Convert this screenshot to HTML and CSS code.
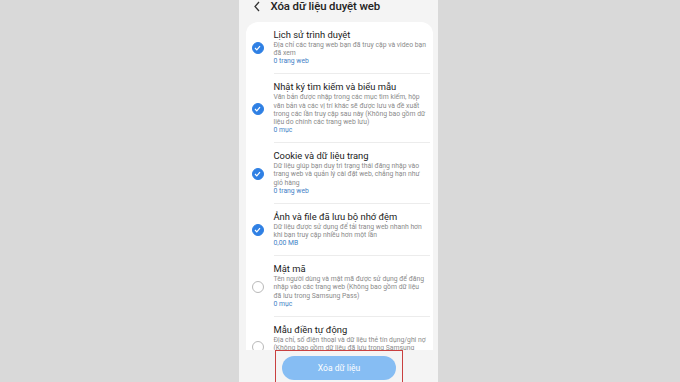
FILE: index.html
```html
<!DOCTYPE html>
<html lang="vi">
<head>
<meta charset="utf-8">
<link rel="stylesheet" href="styles.css">
</head>
<body>
<div class="screen">
  <div class="header">
    <svg class="back" width="8" height="11" viewBox="0 0 8 11"><path d="M6 1 L2 5.5 L6 10" fill="none" stroke="#333" stroke-width="1.3"/></svg>
    <span class="title">Xóa dữ liệu duyệt web</span>
  </div>
  <div class="card">
    <div class="row">
      <span class="check on"><svg width="7" height="6" viewBox="0 0 7 6"><path d="M1 3 L2.8 4.8 L6 1.2" fill="none" stroke="#fff" stroke-width="1.2"/></svg></span>
      <div class="text">
        <div class="name">Lịch sử trình duyệt</div>
        <div class="desc">Địa chỉ các trang web bạn đã truy cập và video bạn đã xem</div>
        <div class="count">0 trang web</div>
      </div>
    </div>
    <div class="row">
      <span class="check on"><svg width="7" height="6" viewBox="0 0 7 6"><path d="M1 3 L2.8 4.8 L6 1.2" fill="none" stroke="#fff" stroke-width="1.2"/></svg></span>
      <div class="text">
        <div class="name">Nhật ký tìm kiếm và biểu mẫu</div>
        <div class="desc">Văn bản được nhập trong các mục tìm kiếm, hộp văn bản và các vị trí khác sẽ được lưu và đề xuất trong các lần truy cập sau này (Không bao gồm dữ liệu do chính các trang web lưu)</div>
        <div class="count">0 mục</div>
      </div>
    </div>
    <div class="row">
      <span class="check on"><svg width="7" height="6" viewBox="0 0 7 6"><path d="M1 3 L2.8 4.8 L6 1.2" fill="none" stroke="#fff" stroke-width="1.2"/></svg></span>
      <div class="text">
        <div class="name">Cookie và dữ liệu trang</div>
        <div class="desc">Dữ liệu giúp bạn duy trì trạng thái đăng nhập vào trang web và quản lý cài đặt web, chẳng hạn như giỏ hàng</div>
        <div class="count">0 trang web</div>
      </div>
    </div>
    <div class="row">
      <span class="check on"><svg width="7" height="6" viewBox="0 0 7 6"><path d="M1 3 L2.8 4.8 L6 1.2" fill="none" stroke="#fff" stroke-width="1.2"/></svg></span>
      <div class="text">
        <div class="name">Ảnh và file đã lưu bộ nhớ đệm</div>
        <div class="desc">Dữ liệu được sử dụng để tải trang web nhanh hơn khi bạn truy cập nhiều hơn một lần</div>
        <div class="count">0,00 MB</div>
      </div>
    </div>
    <div class="row">
      <span class="check"></span>
      <div class="text">
        <div class="name">Mật mã</div>
        <div class="desc">Tên người dùng và mật mã được sử dụng để đăng nhập vào các trang web (Không bao gồm dữ liệu đã lưu trong Samsung Pass)</div>
        <div class="count">0 mục</div>
      </div>
    </div>
    <div class="row">
      <span class="check"></span>
      <div class="text">
        <div class="name">Mẫu điền tự động</div>
        <div class="desc">Địa chỉ, số điện thoại và dữ liệu thẻ tín dụng/ghi nợ (Không bao gồm dữ liệu đã lưu trong Samsung Pass)</div>
        <div class="count">0 mục</div>
      </div>
    </div>
  </div>
  <div class="bottom">
    <div class="highlight">
      <div class="btn">Xóa dữ liệu</div>
    </div>
  </div>
</div>
</body>
</html>
```

FILE: styles.css
```css
* { box-sizing: border-box; }
html, body { margin: 0; padding: 0; }
body {
  width: 680px;
  height: 382px;
  background: #d9d9d9;
  font-family: Roboto, "Noto Sans", "Liberation Sans", sans-serif;
  overflow: hidden;
  display: flex;
  justify-content: center;
}
.screen {
  position: relative;
  width: 199px;
  height: 382px;
  margin-left: -4px;
  background: #f4f4f4;
  overflow: hidden;
  padding: 0 5px 0 7px;
}
.header {
  display: flex;
  align-items: center;
  height: 12px;
  padding-left: 7px;
  gap: 10px;
}
.back { flex: none; }
.title {
  font-size: 11.4px;
  line-height: 12px;
  font-weight: 500;
  color: #222;
  letter-spacing: -0.1px;
}
.card {
  margin-top: 10px;
  background: #fff;
  border-radius: 12px;
  padding: 0 3px 0 6px;
}
.row {
  display: flex;
  align-items: center;
  gap: 10px;
}
.check {
  flex: none;
  width: 12px;
  height: 12px;
  border-radius: 50%;
  border: 1px solid #b9b9b9;
  display: flex;
  align-items: center;
  justify-content: center;
  background: #fff;
}
.check.on {
  background: #2f80e4;
  border-color: #2f80e4;
}
.text {
  flex: 1;
  padding: 7px 0;
  border-bottom: 1px solid #ececec;
}
.row:last-child .text { border-bottom: none; }
.name {
  font-size: 9.4px;
  line-height: 12px;
  color: #1a1a1a;
  font-weight: 400;
}
.desc {
  font-size: 6.8px;
  line-height: 8.2px;
  color: #8a8a8a;
  padding-right: 2px;
}
.count {
  font-size: 6.8px;
  line-height: 9px;
  color: #3f7fc6;
}
.bottom {
  position: absolute;
  left: 0;
  right: 0;
  bottom: 0;
  height: 32px;
  background: #f4f4f4;
  display: flex;
  justify-content: center;
}
.highlight {
  width: 128px;
  height: 36px;
  margin-left: 2px;
  border: 1.5px solid #c9403f;
  padding: 5px 6px 0;
}
.btn {
  height: 24px;
  border-radius: 12px;
  background: #86bdf3;
  color: #fff;
  font-size: 8.5px;
  display: flex;
  align-items: center;
  justify-content: center;
}
```
